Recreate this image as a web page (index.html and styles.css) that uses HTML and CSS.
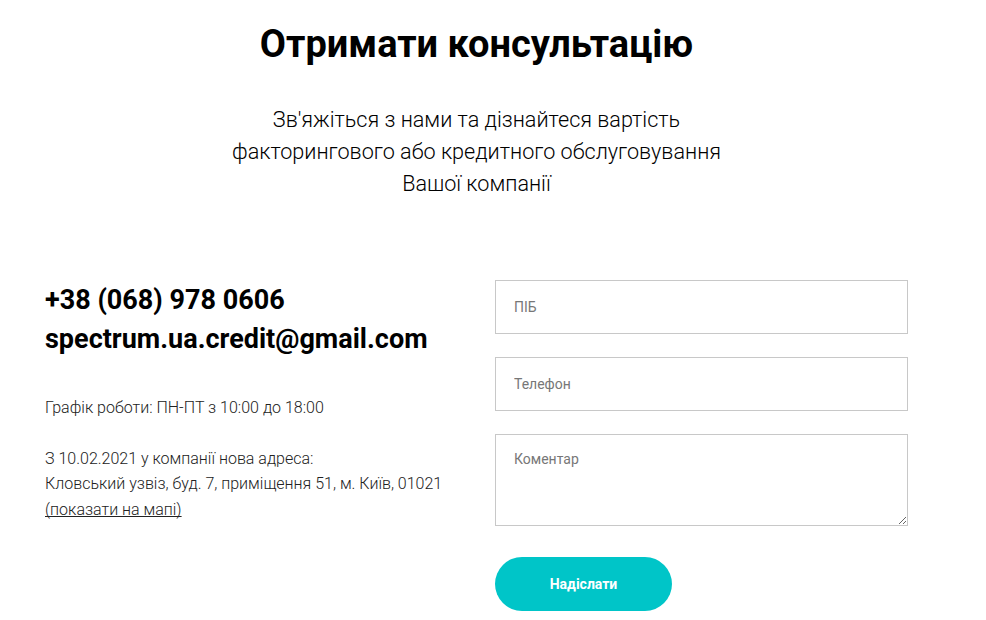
FILE: index.html
```html
<!DOCTYPE html>
<html lang="uk">
<head>
  <meta charset="UTF-8">
  <meta name="viewport" content="width=device-width, initial-scale=1.0">
  <title>Отримати консультацію</title>
  <link rel="stylesheet" href="styles.css">
</head>
<body>
  <section class="consult">
    <h1 class="consult-title">Отримати консультацію</h1>
    <p class="consult-lead">Зв'яжіться з нами та дізнайтеся вартість<br>факторингового або кредитного обслуговування<br>Вашої компанії</p>

    <div class="consult-body">
      <!-- Contacts -->
      <div class="contacts">
        <a class="contacts-big" href="tel:+380689780606">+38 (068) 978 0606</a>
        <a class="contacts-big" href="mailto:spectrum.ua.credit@gmail.com">spectrum.ua.credit@gmail.com</a>
        <p class="contacts-text">Графік роботи: ПН-ПТ з 10:00 до 18:00</p>
        <p class="contacts-text">З 10.02.2021 у компанії нова адреса:<br>Кловський узвіз, буд. 7, приміщення 51, м. Київ, 01021<br><a class="map-link" href="#">(показати на мапі)</a></p>
      </div>

      <!-- Form -->
      <form class="consult-form">
        <input class="field" type="text" placeholder="ПІБ">
        <input class="field" type="tel" placeholder="Телефон">
        <textarea class="field field-area" placeholder="Коментар"></textarea>
        <button class="send-btn" type="button">Надіслати</button>
      </form>
    </div>
  </section>
</body>
</html>
```

FILE: styles.css
```css
/* General Styles */
body {
  margin: 0;
  font-family: Roboto, 'Liberation Sans', sans-serif;
  color: #000;
  background: #fff;
}

.consult {
  width: 863px;
  margin-left: 45px;
  padding-top: 21px;
}

.consult-title {
  margin: 0;
  text-align: center;
  font-size: 38px;
  font-weight: 700;
  line-height: 46px;
}

.consult-lead {
  margin: 37px 0 0;
  text-align: center;
  font-size: 21.6px;
  font-weight: 300;
  line-height: 32px;
}

/* Two columns */
.consult-body {
  display: grid;
  grid-template-columns: 1fr 413px;
  gap: 37px;
  margin-top: 80px;
}

.contacts {
  display: flex;
  flex-direction: column;
  align-items: flex-start;
  padding-top: 1px;
}

.contacts-big {
  color: #000;
  text-decoration: none;
  font-size: 27px;
  font-weight: 700;
  line-height: 39px;
}

.contacts-text {
  margin: 0;
  font-size: 16px;
  font-weight: 300;
  line-height: 25.6px;
  color: #222;
}

.contacts-big + .contacts-text {
  margin-top: 36px;
}

.contacts-text + .contacts-text {
  margin-top: 25px;
}

.map-link {
  color: #222;
  text-decoration: underline;
  text-decoration-skip-ink: none;
}

/* Form */
.consult-form {
  display: flex;
  flex-direction: column;
  align-items: flex-start;
}

.field {
  box-sizing: border-box;
  width: 413px;
  height: 54px;
  margin: 0 0 23px;
  padding: 0 18px;
  border: 1px solid #c8c8c8;
  border-radius: 0;
  font-family: Roboto, 'Liberation Sans', sans-serif;
  font-size: 14px;
  color: #333;
}

.field::placeholder {
  color: #777;
}

.field-area {
  height: 92px;
  padding-top: 16px;
  margin-bottom: 31px;
  resize: vertical;
}

.send-btn {
  width: 177px;
  height: 54px;
  border: none;
  border-radius: 27px;
  background: #00c5c8;
  color: #fff;
  font-family: Roboto, 'Liberation Sans', sans-serif;
  font-size: 14px;
  font-weight: 700;
  cursor: pointer;
}
```
